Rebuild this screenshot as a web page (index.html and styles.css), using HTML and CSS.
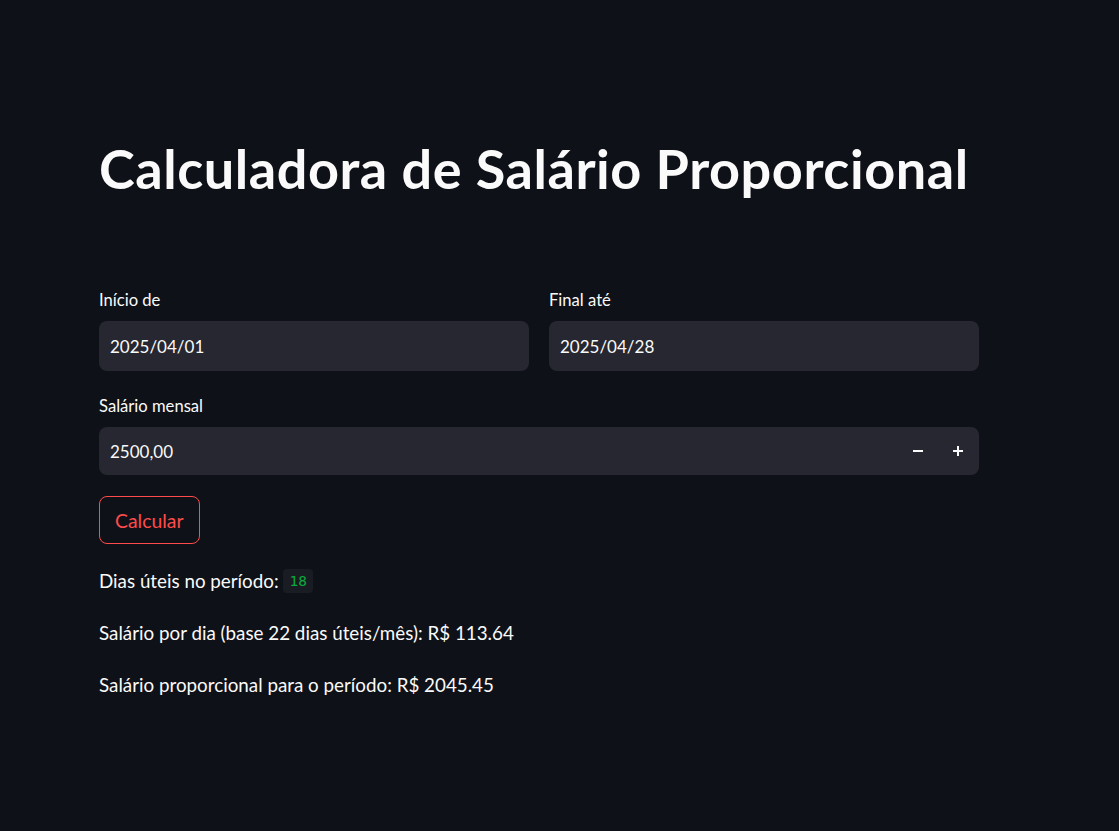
FILE: index.html
```html
<!DOCTYPE html>
<html lang="pt-BR">
<head>
<meta charset="utf-8">
<title>Calculadora de Salário Proporcional</title>
<link rel="stylesheet" href="styles.css">
</head>
<body>
<main class="app">
  <h1 class="title">Calculadora de Salário Proporcional</h1>
  <div class="row">
    <div class="field">
      <label class="label">Início de</label>
      <div class="input">2025/04/01</div>
    </div>
    <div class="field">
      <label class="label">Final até</label>
      <div class="input">2025/04/28</div>
    </div>
  </div>
  <div class="field">
    <label class="label">Salário mensal</label>
    <div class="input number">
      <span class="value">2500,00</span>
      <span class="steppers">
        <span class="step"><svg width="12" height="12" viewBox="0 0 12 12"><rect x="1" y="5" width="10" height="2" fill="#fafafa"/></svg></span>
        <span class="step"><svg width="12" height="12" viewBox="0 0 12 12"><rect x="1" y="5" width="10" height="2" fill="#fafafa"/><rect x="5" y="1" width="2" height="10" fill="#fafafa"/></svg></span>
      </span>
    </div>
  </div>
  <div class="actions"><button class="btn">Calcular</button></div>
  <p class="line">Dias úteis no período: <code class="code">18</code></p>
  <p class="line">Salário por dia (base 22 dias úteis/mês): R$ 113.64</p>
  <p class="line">Salário proporcional para o período: R$ 2045.45</p>
</main>
</body>
</html>
```
FILE: styles.css
```css
html, body {
  margin: 0;
  padding: 0;
  background: #0e1117;
  color: #fafafa;
  font-family: "Lato", "Noto Sans", sans-serif;
}
.app {
  width: 880px;
  margin-left: 99px;
  padding-top: 136px;
  display: flex;
  flex-direction: column;
}
.title {
  margin: 0 0 88px 0;
  font-size: 54px;
  font-weight: 700;
  letter-spacing: 0.55px;
  line-height: 66px;
}
.row {
  display: flex;
  gap: 20px;
}
.row .field { flex: 1; }
.field {
  display: flex;
  flex-direction: column;
  margin-bottom: 25px;
}
.label {
  font-size: 16.6px;
  line-height: 20px;
  margin-bottom: 11px;
}
.input {
  background: #262730;
  border-radius: 8px;
  height: 50px;
  padding: 0 11px;
  display: flex;
  align-items: center;
  font-size: 17px;
}
.number {
  height: 48px;
  justify-content: space-between;
  padding-right: 1px;
}
.steppers { display: flex; }
.step {
  width: 40px;
  height: 48px;
  display: flex;
  align-items: center;
  justify-content: center;
}
.actions { margin-top: -4px; margin-bottom: 24px; }
.btn {
  background: transparent;
  border: 1px solid #ff4b4b;
  color: #ff4b4b;
  border-radius: 8px;
  height: 48px;
  padding: 0 15px;
  font-family: inherit;
  font-size: 19.4px;
}
.line {
  margin: 0 0 26px 0;
  font-size: 18.8px;
  line-height: 26px;
  height: 26px;
}
.code {
  display: inline-block;
  font-family: "DejaVu Sans Mono", monospace;
  font-size: 14.5px;
  line-height: 24px;
  height: 24px;
  vertical-align: 2px;
  color: #09ab3b;
  background: #1a1c24;
  padding: 0 6px;
  border-radius: 4px;
}
```
